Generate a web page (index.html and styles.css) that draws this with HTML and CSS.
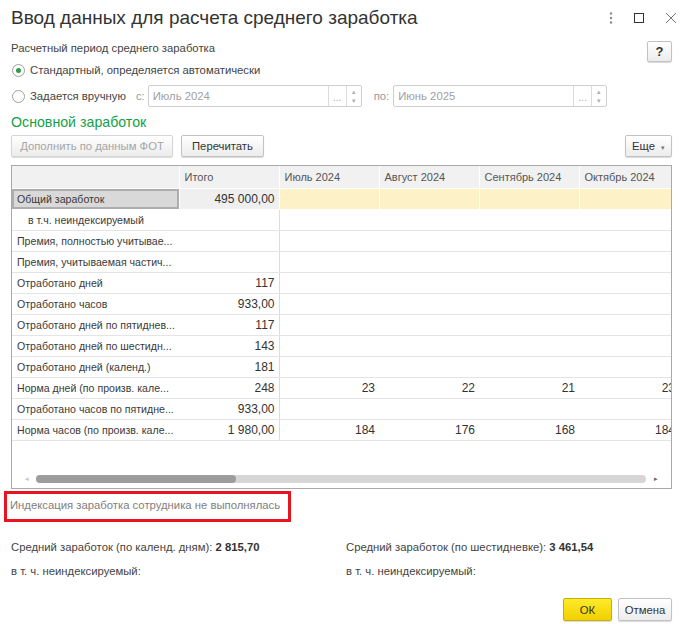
FILE: index.html
```html
<!DOCTYPE html>
<html lang="ru">
<head>
    <meta charset="UTF-8">
    <meta name="viewport" content="width=device-width, initial-scale=1.0">
    <title>Ввод данных для расчета среднего заработка</title>
    <link rel="stylesheet" href="styles.css">
</head>
<body>
    <div class="window">
        <header class="titlebar">
            <h1>Ввод данных для расчета среднего заработка</h1>
            <div class="win-controls">
                <svg class="ico-dots" width="4" height="12" viewBox="0 0 4 12">
                    <circle cx="2" cy="1.5" r="1.2"/>
                    <circle cx="2" cy="6" r="1.2"/>
                    <circle cx="2" cy="10.5" r="1.2"/>
                </svg>
                <svg class="ico-max" width="10" height="10" viewBox="0 0 10 10">
                    <rect x="0.5" y="0.5" width="9" height="9"/>
                </svg>
                <svg class="ico-close" width="12" height="12" viewBox="0 0 12 12">
                    <path d="M1 1 L11 11 M11 1 L1 11"/>
                </svg>
            </div>
        </header>

        <section class="period">
            <div class="period-fields">
                <div class="caption">Расчетный период среднего заработка</div>
                <div class="radio-row first">
                    <span class="radio checked"></span>
                    <span>Стандартный, определяется автоматически</span>
                </div>
                <div class="radio-row second">
                    <span class="radio"></span>
                    <span>Задается вручную</span>
                    <span class="hint from">с:</span>
                    <div class="date-input">
                        <span class="value">Июль 2024</span>
                        <span class="choice">...</span>
                        <span class="spin"><i>&#9652;</i><i>&#9662;</i></span>
                    </div>
                    <span class="hint to">по:</span>
                    <div class="date-input">
                        <span class="value">Июнь 2025</span>
                        <span class="choice">...</span>
                        <span class="spin"><i>&#9652;</i><i>&#9662;</i></span>
                    </div>
                </div>
            </div>
            <button class="btn help">?</button>
        </section>

        <h2 class="group-title">Основной заработок</h2>

        <div class="toolbar">
            <button class="btn disabled">Дополнить по данным ФОТ</button>
            <button class="btn">Перечитать</button>
            <button class="btn more">Еще <span class="caret">&#9662;</span></button>
        </div>

        <div class="grid">
            <div class="grid-body">
                <table>
                    <colgroup>
                        <col class="c-label"><col class="c-num"><col class="c-num"><col class="c-num"><col class="c-num"><col class="c-num">
                    </colgroup>
                    <thead>
                        <tr>
                            <th></th>
                            <th>Итого</th>
                            <th>Июль 2024</th>
                            <th>Август 2024</th>
                            <th>Сентябрь 2024</th>
                            <th>Октябрь 2024</th>
                        </tr>
                    </thead>
                    <tbody>
                        <tr class="current">
                            <td class="label selected">Общий заработок</td>
                            <td class="total">495 000,00</td>
                            <td></td><td></td><td></td><td></td>
                        </tr>
                        <tr>
                            <td class="label sub">в т.ч. неиндексируемый</td>
                            <td class="total"></td>
                            <td></td><td></td><td></td><td></td>
                        </tr>
                        <tr>
                            <td class="label">Премия, полностью учитывае...</td>
                            <td class="total"></td>
                            <td></td><td></td><td></td><td></td>
                        </tr>
                        <tr>
                            <td class="label">Премия, учитываемая частич...</td>
                            <td class="total"></td>
                            <td></td><td></td><td></td><td></td>
                        </tr>
                        <tr>
                            <td class="label">Отработано дней</td>
                            <td class="total">117</td>
                            <td></td><td></td><td></td><td></td>
                        </tr>
                        <tr>
                            <td class="label">Отработано часов</td>
                            <td class="total">933,00</td>
                            <td></td><td></td><td></td><td></td>
                        </tr>
                        <tr>
                            <td class="label">Отработано дней по пятиднев...</td>
                            <td class="total">117</td>
                            <td></td><td></td><td></td><td></td>
                        </tr>
                        <tr>
                            <td class="label">Отработано дней по шестидн...</td>
                            <td class="total">143</td>
                            <td></td><td></td><td></td><td></td>
                        </tr>
                        <tr>
                            <td class="label">Отработано дней (календ.)</td>
                            <td class="total">181</td>
                            <td></td><td></td><td></td><td></td>
                        </tr>
                        <tr>
                            <td class="label">Норма дней (по произв. кале...</td>
                            <td class="total">248</td>
                            <td>23</td><td>22</td><td>21</td><td>23</td>
                        </tr>
                        <tr>
                            <td class="label">Отработано часов по пятидне...</td>
                            <td class="total">933,00</td>
                            <td></td><td></td><td></td><td></td>
                        </tr>
                        <tr>
                            <td class="label">Норма часов (по произв. кале...</td>
                            <td class="total">1 980,00</td>
                            <td>184</td><td>176</td><td>168</td><td>184</td>
                        </tr>
                    </tbody>
                </table>
            </div>
            <div class="hscroll">
                <span class="arrow left">&#9666;</span>
                <div class="track"><div class="thumb"></div></div>
                <span class="arrow right">&#9656;</span>
            </div>
        </div>

        <div class="note">Индексация заработка сотрудника не выполнялась</div>

        <div class="summary">
            <div>Средний заработок (по календ. дням): <b>2 815,70</b></div>
            <div>Средний заработок (по шестидневке): <b>3 461,54</b></div>
            <div>в т. ч. неиндексируемый:</div>
            <div>в т. ч. неиндексируемый:</div>
        </div>

        <div class="footer">
            <button class="btn ok">ОК</button>
            <button class="btn cancel">Отмена</button>
        </div>
    </div>
</body>
</html>
```

FILE: styles.css
```css
* {
    box-sizing: border-box;
}

body {
    margin: 0;
    background-color: #fff;
    color: #444;
    font-family: 'Liberation Sans', Arial, sans-serif;
    font-size: 11.3px;
}

.window {
    width: 686px;
    height: 624px;
    overflow: hidden;
}

/* Заголовок окна */

.titlebar {
    display: flex;
    justify-content: space-between;
    align-items: center;
    height: 36px;
    padding: 0 9px 0 11px;
}

.titlebar h1 {
    margin: 0;
    font-size: 19px;
    font-weight: normal;
    color: #333;
}

.win-controls {
    display: flex;
    align-items: center;
    gap: 21px;
}

.ico-dots {
    fill: #8a8a8a;
}

.ico-max {
    fill: none;
    stroke: #333;
}

.ico-close {
    fill: none;
    stroke: #777;
    stroke-width: 1;
}

/* Период */

.period {
    display: flex;
    justify-content: space-between;
    margin-top: 2px;
    padding: 0 14px 0 11px;
}

.caption {
    line-height: 20px;
    color: #444;
}

.radio-row {
    display: flex;
    align-items: center;
    color: #444;
    white-space: nowrap;
}

.radio-row.first {
    margin-top: 2px;
    height: 20px;
}

.radio-row.second {
    margin-top: 4px;
    height: 24px;
}

.radio {
    width: 13px;
    height: 13px;
    margin: 0 5px 0 1px;
    border: 1px solid #a0a0a0;
    border-radius: 50%;
    background-color: #fff;
    display: flex;
    align-items: center;
    justify-content: center;
}

.radio.checked::after {
    content: "";
    width: 5px;
    height: 5px;
    border-radius: 50%;
    background-color: #2f9a47;
}

.hint {
    color: #9a9a9a;
}

.hint.from {
    margin: 0 3px 0 10px;
}

.hint.to {
    margin: 0 4px 0 12px;
}

.date-input {
    display: flex;
    height: 22px;
    border: 1px solid #cfcfcf;
    border-radius: 2px;
    background-color: #fff;
}

.date-input .value {
    width: 179px;
    padding-left: 4px;
    line-height: 20px;
    color: #a0a0a0;
}

.date-input .choice {
    width: 18px;
    border-left: 1px solid #dcdcdc;
    color: #a0a0a0;
    font-size: 10px;
    text-align: center;
    line-height: 24px;
}

.date-input .spin {
    width: 15px;
    border-left: 1px solid #dcdcdc;
    display: flex;
    flex-direction: column;
    align-items: center;
    justify-content: center;
    color: #b0b0b0;
    font-size: 7px;
    line-height: 9px;
}

.date-input .spin i {
    font-style: normal;
}

/* Кнопки */

.btn {
    height: 22px;
    padding: 0 10px;
    border: 1px solid #c2c2c2;
    border-radius: 2px;
    background: linear-gradient(#ffffff, #ececec);
    box-shadow: 0 1px 1px rgba(0, 0, 0, 0.15);
    color: #333;
    font-family: inherit;
    font-size: 11.3px;
    white-space: nowrap;
    cursor: pointer;
}

.btn.disabled {
    color: #a6a6a6;
    border-color: #d6d6d6;
}

.help {
    width: 25px;
    height: 21px;
    margin-top: 3px;
    padding: 0;
    font-size: 13px;
    font-weight: bold;
}

.group-title {
    margin: 0;
    height: 25px;
    padding-left: 11px;
    line-height: 28px;
    font-size: 14.2px;
    font-weight: normal;
    color: #14a048;
}

.toolbar {
    display: flex;
    gap: 8px;
    margin-top: 2px;
    padding: 0 14px 0 11px;
}

.toolbar .disabled {
    width: 162px;
    padding: 0;
}

.toolbar .more {
    margin-left: auto;
    width: 47px;
    padding: 0 4px;
}

.caret {
    font-size: 7px;
    color: #777;
    margin-left: 3px;
}

/* Таблица */

.grid {
    display: flex;
    flex-direction: column;
    height: 324px;
    margin: 8px 14px 0 11px;
    border: 1px solid #a9a9a9;
}

.grid-body {
    flex: 1;
    overflow: hidden;
}

table {
    width: 667px;
    table-layout: fixed;
    border-collapse: collapse;
}

.c-label {
    width: 167px;
}

.c-num {
    width: 100px;
}

th {
    height: 22px;
    padding: 0 5px;
    background-color: #f1f1f1;
    border-right: 1px solid #fff;
    border-bottom: 1px solid #fff;
    color: #555;
    font-size: 11px;
    font-weight: normal;
    text-align: left;
    white-space: nowrap;
}

td {
    height: 21px;
    padding: 0 4px;
    border-bottom: 1px solid #e4e4e4;
    text-align: right;
    color: #333;
    font-size: 12px;
    white-space: nowrap;
    overflow: hidden;
}

td.label {
    text-align: left;
    font-size: 10.6px;
    color: #3a3a3a;
    padding-left: 5px;
}

td.label.sub {
    padding-left: 16px;
}

td.total {
    border-right: 1px solid #dcdcdc;
}

tr.current td {
    background-color: #fdf1c7;
    border-right: 1px solid #fff;
    border-bottom-color: #fff;
}

tr.current td.total {
    background-color: #efefef;
}

tr.current td.selected {
    background-color: #d9d9d9;
    box-shadow: inset 0 0 0 2px #adadad;
}

.hscroll {
    display: flex;
    align-items: center;
    height: 16px;
    margin-bottom: 1px;
    padding: 0 8px;
}

.arrow {
    width: 14px;
    font-size: 7px;
    text-align: center;
}

.arrow.left {
    color: #c4c4c4;
    margin-right: 2px;
}

.arrow.right {
    color: #666;
    margin-left: 3px;
}

.track {
    flex: 1;
    height: 8px;
    border-radius: 4px;
    background-color: #d6d6d6;
}

.thumb {
    width: 200px;
    height: 8px;
    border-radius: 4px;
    background-color: #9d9d9d;
}

/* Индексация и итоги */

.note {
    width: 287px;
    height: 31px;
    margin: 2px 0 0 4px;
    padding-left: 3px;
    border: 3px solid #e8141f;
    line-height: 22px;
    color: #808080;
    white-space: nowrap;
}

.summary {
    display: grid;
    grid-template-columns: 335px 1fr;
    grid-auto-rows: 24px;
    align-items: center;
    margin-top: 13px;
    padding-left: 11px;
    color: #444;
}

.summary b {
    color: #333;
}

.footer {
    display: flex;
    justify-content: flex-end;
    gap: 6px;
    margin-top: 15px;
    padding-right: 14px;
}

.footer .btn {
    height: 23px;
}

.ok {
    width: 49px;
    background: linear-gradient(#ffea2a, #f0d000);
    border-color: #c9b000;
}

.cancel {
    width: 54px;
    padding: 0;
}
```
